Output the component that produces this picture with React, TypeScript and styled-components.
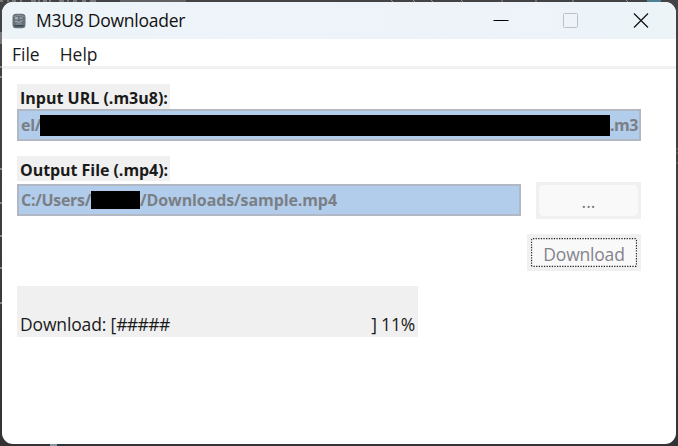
import React from "react";
import styled, { createGlobalStyle } from "styled-components";

const GlobalStyle = createGlobalStyle`
  * { box-sizing: border-box; }
  body { margin: 0; overflow: hidden; }
`;

const Desktop = styled.div`
  position: relative;
  width: 678px;
  height: 446px;
  padding: 2px;
  overflow: hidden;
  background: linear-gradient(#434345, #3c3c3e 60%, #333335);
  font-family: "Open Sans", "Noto Sans", sans-serif;
`;

const Backdrop = styled.svg`
  position: absolute;
  inset: 0;
`;

const Window = styled.main`
  position: relative;
  display: flex;
  flex-direction: column;
  width: 674px;
  height: 442px;
  border-radius: 11px;
  overflow: hidden;
  background: #fff;
`;

const TitleBar = styled.header`
  display: flex;
  align-items: center;
  flex: 0 0 37px;
  padding-left: 10px;
  background: linear-gradient(90deg, #edf4f8, #eef3fa 70%, #ecf4f8);
`;

const Text = styled.span<{ $size: number; $spacing?: number; $color?: string; $bold?: boolean }>`
  font-family: "Open Sans", "Noto Sans", sans-serif;
  font-size: ${(p) => p.$size}px;
  line-height: 20px;
  letter-spacing: ${(p) => p.$spacing ?? 0}px;
  color: ${(p) => p.$color ?? "#1a1a1a"};
  font-weight: ${(p) => (p.$bold ? 700 : 400)};
  white-space: pre;
`;

const AppName = styled.h1`
  display: flex;
  margin: 0 auto 0 10px;
  padding-bottom: 1px;
`;

const CaptionButtons = styled.div`
  display: flex;
  height: 100%;
`;

const CaptionButton = styled.button`
  display: grid;
  place-items: center;
  width: 70px;
  padding: 0 0 2px;
  border: 0;
  background: none;
`;

const MenuBar = styled.nav`
  display: flex;
  align-items: center;
  gap: 20px;
  flex: 0 0 30px;
  padding: 2px 0 0 10px;
  border-bottom: 3px solid #f1f1f1;
`;

const Form = styled.section`
  display: flex;
  flex-direction: column;
  align-items: flex-start;
  width: 639px;
  padding: 15px 0 0 15px;
`;

const FieldLabel = styled.label`
  display: flex;
  align-items: center;
  width: 153px;
  height: 25px;
  padding: 2px 0 0 3px;
  background: #f0f0f0;
`;

const Field = styled.div<{ $width: number }>`
  display: flex;
  align-items: center;
  width: ${(p) => p.$width}px;
  height: 32px;
  padding-left: 2px;
  border: 2px solid #b1b8c4;
  background: #b1cdeb;
`;

const Redaction = styled.span<{ $width: number; $height: number }>`
  flex: none;
  width: ${(p) => p.$width}px;
  height: ${(p) => p.$height}px;
  background: #000;
`;

const Lead = styled.span<{ $width: number }>`
  display: flex;
  flex: none;
  width: ${(p) => p.$width}px;
`;

const OutputLabelRow = styled.div`
  padding-top: 15px;
`;

const OutputRow = styled.div`
  display: flex;
  align-items: center;
  justify-content: space-between;
  width: 100%;
  height: 38px;
`;

const ButtonFrame = styled.div<{ $width: number }>`
  display: flex;
  width: ${(p) => p.$width}px;
  height: 37px;
  padding: 3px;
  background: #f0f0f0;
`;

const PushButton = styled.button`
  display: grid;
  place-items: center;
  flex: 1;
  padding: 2px 0 0;
  border: 0;
  border-radius: 5px;
  background: #f9f9f9;
`;

const FocusedButton = styled(PushButton)`
  position: relative;
  margin: 1px;
  border-radius: 3px;
`;

const FocusRing = styled.svg`
  position: absolute;
  inset: 0;
`;

const ActionRow = styled.div`
  display: flex;
  justify-content: flex-end;
  width: 100%;
  padding-top: 15px;
`;

const Status = styled.div`
  display: flex;
  align-items: flex-end;
  width: 401px;
  height: 51px;
  margin-top: 15px;
  padding: 0 3px 3px 3px;
  background: #f0f0f0;
`;

const Percent = styled.span`
  display: flex;
  margin-left: auto;
`;

function AppIcon() {
  return (
    <svg width="14" height="16" viewBox="0 0 14 16">
      <rect x="0.5" y="0.8" width="13" height="14.4" rx="3.5" fill="#66717a" />
      <path d="M1.5 3.5Q7 1 12.5 3.5" stroke="#89949c" fill="none" />
      <rect x="3" y="4" width="3" height="2.5" fill="#a0abb2" />
      <rect x="7.5" y="4" width="3" height="2" fill="#8c979f" />
      <path d="M3 8.5h2l2 1 3.5-2" stroke="#aab4bb" fill="none" />
      <path d="M2.5 12.7h9" stroke="#3b454d" strokeWidth="1.5" />
      <path d="M4 11h6" stroke="#8c979f" />
    </svg>
  );
}

export default function App() {
  return (
    <>
      <GlobalStyle />
      <Desktop>
        <Backdrop width="678" height="446">
          <path
            d="M0 1h3M8 0v2M12 1h4M21 0v2M31 1h5M39 0v2M43 1h4M50 0v2M59 1h5M68 0v2M73 1h4M82 1h4M90 1h6"
            stroke="#8b8b8d"
            strokeWidth="1.5"
          />
          <path d="M120 1h66" stroke="#626264" strokeWidth="2" />
          <path
            d="M391 0l2 2M413 0l2 2M431 0l2 2M461 0l2 2M502 0v2M536 0v2M573 0v2M626 0l2 2"
            stroke="#8a98a5"
          />
          <path d="M647 1h14" stroke="#4e8194" strokeWidth="2" />
          <path d="M0 32h2v12H0z" fill="#777779" />
          <path d="M0 67h2M0 77h2M0 169h2M0 203h2M0 236h2M0 268h2M0 303h2" stroke="#858587" strokeWidth="2" />
          <path d="M677 148v2M676 153h2M676 163h2" stroke="#527c4a" />
          <path d="M50 445h7" stroke="#8996a2" strokeWidth="2" />
        </Backdrop>
        <Window>
          <TitleBar>
            <AppIcon />
            <AppName>
              <Text $size={17.5} $spacing={-0.25} $color="#111">M3U8 Downloader</Text>
            </AppName>
            <CaptionButtons>
              <CaptionButton aria-label="Minimize">
                <svg width="16" height="16" viewBox="0 0 16 16">
                  <path d="M0.5 8.5h15" stroke="#000" />
                </svg>
              </CaptionButton>
              <CaptionButton aria-label="Maximize" disabled>
                <svg width="16" height="16" viewBox="0 0 16 16">
                  <rect x="0.5" y="1.5" width="14" height="14" rx="1" fill="none" stroke="#bcc1c5" />
                </svg>
              </CaptionButton>
              <CaptionButton aria-label="Close">
                <svg width="16" height="16" viewBox="0 0 16 16">
                  <path d="M1 1.5l14 14M15 1.5L1 15.5" stroke="#111" strokeWidth="1.2" />
                </svg>
              </CaptionButton>
            </CaptionButtons>
          </TitleBar>
          <MenuBar>
            <Text $size={17.5}>File</Text>
            <Text $size={17.5}>Help</Text>
          </MenuBar>
          <Form>
            <FieldLabel>
              <Text $size={16} $bold>Input URL (.m3u8):</Text>
            </FieldLabel>
            <Field $width={624}>
              <Lead $width={19}>
                <Text $size={16} $spacing={-0.3} $color="#7b7f85" $bold>el/</Text>
              </Lead>
              <Redaction $width={570} $height={21} />
              <Text $size={16} $spacing={-0.5} $color="#7b7f85" $bold>.m3</Text>
            </Field>
            <OutputLabelRow>
              <FieldLabel>
                <Text $size={16} $spacing={-0.05} $bold>Output File (.mp4):</Text>
              </FieldLabel>
            </OutputLabelRow>
            <OutputRow>
              <Field $width={504}>
                <Lead $width={70}>
                  <Text $size={16} $spacing={-0.3} $color="#7b7f85" $bold>C:/Users/</Text>
                </Lead>
                <Redaction $width={49} $height={18} />
                <Text $size={16} $spacing={-0.1} $color="#7b7f85" $bold>/Downloads/sample.mp4</Text>
              </Field>
              <ButtonFrame $width={105}>
                <PushButton disabled>
                  <Text $size={17.5} $color="#77777f">...</Text>
                </PushButton>
              </ButtonFrame>
            </OutputRow>
            <ActionRow>
              <ButtonFrame $width={114}>
                <FocusedButton disabled>
                  <FocusRing width="106" height="29">
                    <rect x="0.5" y="0.5" width="105" height="28" rx="1.5" fill="none" stroke="#222" strokeWidth="1.3" strokeDasharray="1.3 1.3" />
                  </FocusRing>
                  <Text $size={17.5} $spacing={-0.2} $color="#83838b">Download</Text>
                </FocusedButton>
              </ButtonFrame>
            </ActionRow>
            <Status>
              <Text $size={17.5} $spacing={-0.15}>Download: [</Text>
              <Text $size={17.5} $spacing={-0.6}>#####</Text>
              <Percent>
                <Text $size={17.5} $spacing={-0.2}>] 11%</Text>
              </Percent>
            </Status>
          </Form>
        </Window>
      </Desktop>
    </>
  );
}
